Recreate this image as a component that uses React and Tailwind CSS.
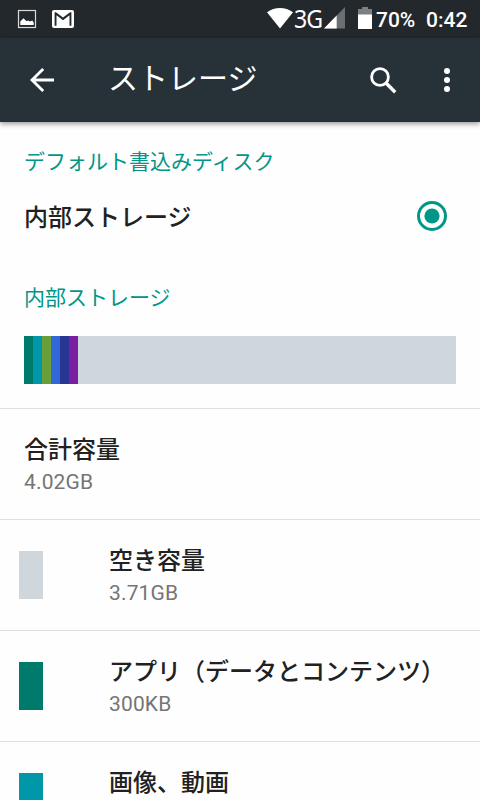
import React from 'react';

const segments = [
    { id: 'apps', color: 'bg-[#007a6a]' },
    { id: 'images', color: 'bg-[#0097a9]' },
    { id: 'audio', color: 'bg-[#689f39]' },
    { id: 'downloads', color: 'bg-[#3367d6]' },
    { id: 'cache', color: 'bg-[#283593]' },
    { id: 'misc', color: 'bg-[#7b1fa2]' },
];

const items = [
    { id: 'total', label: '合計容量', value: '4.02GB', color: null },
    { id: 'free', label: '空き容量', value: '3.71GB', color: 'bg-[#cfd7dd]' },
    { id: 'apps', label: 'アプリ（データとコンテンツ）', value: '300KB', color: 'bg-[#007a6a]' },
    { id: 'images', label: '画像、動画', value: '', color: 'bg-[#0097a9]' },
];

function StatusBar() {
    return (
        <div className="flex h-[38px] shrink-0 items-center bg-[#23282c] pl-[17px] pr-[12px] text-white">
            <svg width="20" height="20" viewBox="0 0 20 20">
                <rect x="1.5" y="1.5" width="17" height="17" fill="none" stroke="#d8dadb" strokeWidth="1.2" />
                <path d="M3.3 16v-3.5l3.2-3.2 3 3 1.5-.8 2 1 2.2-1 1.5 2V16z" fill="#fff" />
            </svg>
            <svg className="ml-[15px]" width="22" height="20" viewBox="0 0 22 20">
                <rect x="0" y="1" width="22" height="18" rx="2" fill="#fff" />
                <path d="M2.6 16.8V3.2h1.3L11 8.6l7.1-5.4h1.3v13.6h-1.9V6.2L11 11.2 4.5 6.2v10.6z" fill="#23282c" />
            </svg>

            {/* Wifi, network, battery, clock */}
            <div className="ml-auto flex items-center">
                <svg className="-mt-[2px]" width="26" height="22" viewBox="0 0 26 22">
                    <path d="M0 5.3C7.5-.4 18.5-.4 26 5.3L13 21.5z" fill="#fff" />
                </svg>
                <span className="-mt-[2px] w-[31px] pl-px font-['Noto_Sans',sans-serif] text-[26px] leading-[34px] tracking-[-1px]">
                    <span className="inline-block origin-left scale-x-[0.89]">3G</span>
                </span>
                <svg className="-mt-[2px]" width="21" height="22" viewBox="0 0 21 22">
                    <path d="M21 0v21.5H0z" fill="#6b6e70" />
                    <path d="M12.7 8.5v13H0z" fill="#fff" />
                </svg>
                <svg className="-mt-[2px] ml-[13px]" width="14" height="22" viewBox="0 0 14 22">
                    <path d="M4 0h6v2h4v6H0V2h4z" fill="#7d8082" />
                    <path d="M0 7.5h14V22H0z" fill="#fff" />
                </svg>
                <span className="ml-[4px] mt-[2px] w-[50px] font-[Roboto,sans-serif] text-[21px] font-medium leading-[36px]">70%</span>
                <span className="mt-[2px] w-[42px] font-[Roboto,sans-serif] text-[21px] font-medium leading-[36px]">0:42</span>
            </div>
        </div>
    );
}

function AppBar() {
    return (
        <header className="relative flex h-[84px] shrink-0 items-center bg-[#273238] pl-[30px] pr-[30px] text-white shadow-[0_2px_5px_rgba(0,0,0,0.4)]">
            <svg width="24" height="24" viewBox="0 0 24 24" fill="none" stroke="#fff" strokeWidth="2.8">
                <path d="M24 12H2M13.2 .9L2 12l11.2 11.1" />
            </svg>
            <h1 className="-mt-[9px] ml-[54px] font-['Noto_Sans_CJK_JP',sans-serif] text-[30px] leading-[40px]">ストレージ</h1>
            <svg className="ml-auto" width="27" height="27" viewBox="0 0 27 27" fill="none" stroke="#fff">
                <circle cx="10" cy="10" r="8.4" strokeWidth="2.8" />
                <path d="M16 16l9.2 9.2" strokeWidth="3.4" />
            </svg>
            <svg className="ml-[47px]" width="6" height="24" viewBox="0 0 6 24" fill="#fff">
                <circle cx="3" cy="3" r="3" />
                <circle cx="3" cy="12" r="3" />
                <circle cx="3" cy="21" r="3" />
            </svg>
        </header>
    );
}

function StorageItem({ label, value, color }) {
    return (
        <li className="flex h-[111px] shrink-0 border-t border-[#dfdfdf]">
            {color && (
                <div className="w-[85px] shrink-0 pl-[19px] pt-[31px]">
                    <div className={`h-[48px] w-[24px] ${color}`} />
                </div>
            )}
            <div className="pl-[24px] pt-[21px]">
                <div className="whitespace-nowrap font-['Noto_Sans_CJK_JP',sans-serif] text-[24px] font-medium leading-[36px] text-[#212121]">{label}</div>
                <div className="mt-px font-[Roboto,sans-serif] text-[21px] leading-[30px] tracking-[0.15px] text-[#757575]">{value}</div>
            </div>
        </li>
    );
}

export default function App() {
    return (
        <div className="flex h-[800px] w-[480px] flex-col overflow-hidden bg-[#fefefe]">
            <StatusBar />
            <AppBar />

            {/* Default write disk */}
            <h2 className="h-[78px] shrink-0 px-6 font-['Noto_Sans_CJK_JP',sans-serif] text-[21px] leading-[76px] text-[#009688]">
                デフォルト書込みディスク
            </h2>
            <div className="flex h-[32px] shrink-0 items-center justify-between pl-6 pr-[33px]">
                <span className="font-['Noto_Sans_CJK_JP',sans-serif] text-[24px] font-medium leading-[32px] text-[#212121]">内部ストレージ</span>
                <svg width="30" height="30" viewBox="0 0 30 30">
                    <circle cx="15" cy="15" r="13.5" fill="none" stroke="#009688" strokeWidth="3" />
                    <circle cx="15" cy="15" r="7.6" fill="#009688" />
                </svg>
            </div>

            {/* Internal storage usage */}
            <h2 className="mt-[48px] h-[33px] shrink-0 px-6 font-['Noto_Sans_CJK_JP',sans-serif] text-[21px] leading-[32px] text-[#009688]">
                内部ストレージ
            </h2>
            <div className="mx-6 mb-6 mt-[23px] flex h-12 shrink-0 bg-[#cfd7dd]">
                {segments.map((s) => (
                    <div key={s.id} className={`w-[9px] ${s.color}`} />
                ))}
            </div>

            <ul>
                {items.map((item) => (
                    <StorageItem key={item.id} label={item.label} value={item.value} color={item.color} />
                ))}
            </ul>
        </div>
    );
}
